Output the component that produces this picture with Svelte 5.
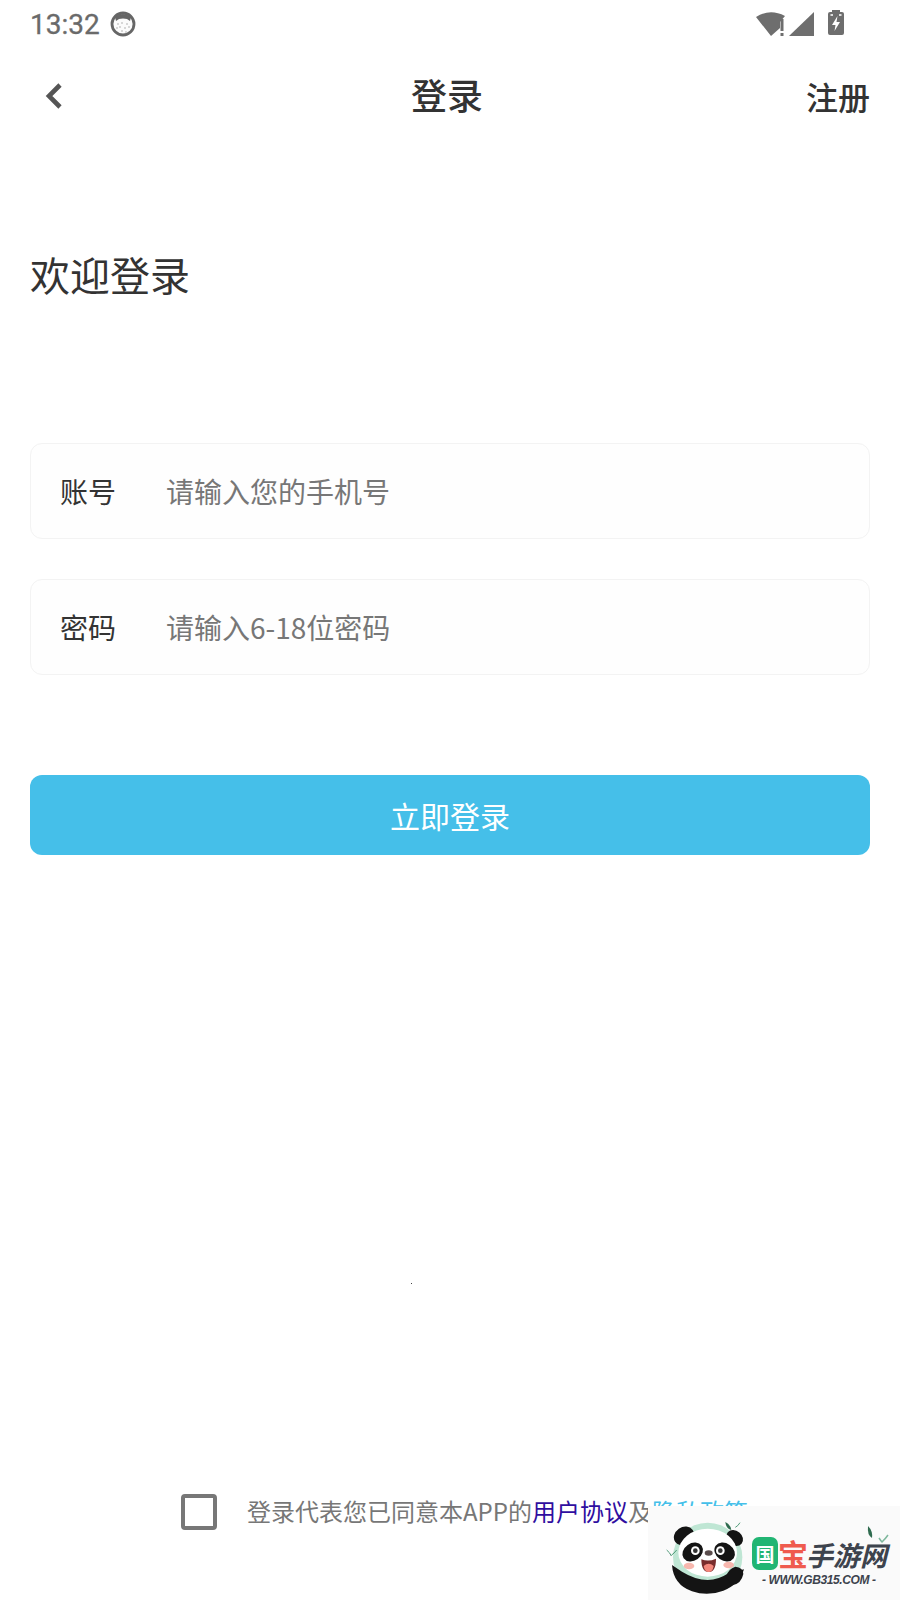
<script>
	let agreed = $state(false);
</script>

<div class="page">
	<div class="status">
		<span class="time">13:32</span>
		<svg class="cat" viewBox="0 0 26 26" width="26" height="26">
			<circle cx="13" cy="13" r="11" fill="#fbfbfb" stroke="#666" stroke-width="2.8" />
			<path d="M5 6 Q13 0 21 6 L20 10 L17 8 Q13 7 9 8 L6 10Z" fill="#666" />
			<g fill="#999">
				<circle cx="8" cy="13" r=".7" /><circle cx="12" cy="12" r=".7" /><circle cx="17" cy="13" r=".7" />
				<circle cx="10" cy="16" r=".7" /><circle cx="15" cy="17" r=".7" /><circle cx="19" cy="16" r=".7" />
				<circle cx="7" cy="17" r=".7" /><circle cx="12" cy="20" r=".7" /><circle cx="16" cy="21" r=".7" />
			</g>
		</svg>
		<span class="spacer"></span>
		<svg class="sys" viewBox="0 0 94 28" width="94" height="28">
			<path d="M0 8 Q14 -1 29 7 L24 13 V19 L15 27Z" fill="#6e6e6e" />
			<rect x="24.500" y="10" width="3" height="12" fill="#6e6e6e" />
			<rect x="24.500" y="24" width="3" height="3" fill="#6e6e6e" />
			<path d="M33 27 L58 3 V27Z" fill="#6e6e6e" />
			<path d="M76 3 V1 H84 V3 H86 Q88 3 88 5 V24 Q88 26 86 26 H74 Q72 26 72 24 V5 Q72 3 74 3Z" fill="#6e6e6e" />
			<path d="M81.500 7 L76 16 H79.500 L78.500 22 L84 13 H80.500Z" fill="#fff" />
			<path d="M74.500 5 H77 V7 H74.500Z M83 5 H85.500 V7 H83Z" fill="#ddd" />
		</svg>
	</div>

	<div class="nav">
		<svg class="back" viewBox="0 0 20 28" width="20" height="28">
			<path d="M16 3 L5 14 L16 25" fill="none" stroke="#555" stroke-width="4.600" />
		</svg>
		<span class="title">登录</span>
		<span class="reg">注册</span>
	</div>

	<h1>欢迎登录</h1>

	<div class="field first">
		<span class="label">账号</span>
		<span class="hint">请输入您的手机号</span>
	</div>
	<div class="field">
		<span class="label">密码</span>
		<span class="hint">请输入6-18位密码</span>
	</div>

	<button class="submit">立即登录</button>

	<div class="agree">
		<button class="check" class:on={agreed} aria-label="同意" onclick={() => (agreed = !agreed)}></button>
		<span class="terms">登录代表您已同意本APP的<span class="link">用户协议</span>及<span class="link2">隐私政策</span></span>
	</div>

	<i class="dot"></i>

	<div class="mark">
		<svg class="panda" viewBox="0 0 330 270" width="110" height="90">
			<circle cx="143" cy="142" r="104" fill="#bfe6d4" />
			<!-- body -->
			<path d="M36 165 Q40 224 96 244 Q143 260 190 242 Q238 224 252 178 L205 190 Q143 232 66 185Z" fill="#141414" />
			<!-- ears -->
			<ellipse cx="72" cy="78" rx="32" ry="27" transform="rotate(-35 72 78)" fill="#141414" />
			<ellipse cx="224" cy="84" rx="27" ry="22" transform="rotate(40 224 84)" fill="#141414" />
			<!-- head -->
			<ellipse cx="143" cy="128" rx="88" ry="72" fill="#fff" />
			<ellipse cx="98" cy="126" rx="33" ry="26" transform="rotate(-35 98 126)" fill="#141414" />
			<ellipse cx="194" cy="126" rx="33" ry="26" transform="rotate(35 194 126)" fill="#141414" />
			<circle cx="106" cy="122" r="13" fill="#fff" /><circle cx="106" cy="122" r="7" fill="#333" />
			<circle cx="181" cy="122" r="13" fill="#fff" /><circle cx="181" cy="122" r="7" fill="#333" />
			<ellipse cx="146" cy="129" rx="12" ry="8" fill="#5a4c4c" />
			<path d="M124 148 Q146 156 168 146 Q168 186 146 186 Q124 186 124 148Z" fill="#7a2d2d" />
			<path d="M131 168 Q146 155 161 168 Q158 186 146 186 Q134 186 131 168Z" fill="#f4877c" />
			<ellipse cx="87" cy="168" rx="16" ry="10" fill="#f7b7ae" />
			<ellipse cx="206" cy="165" rx="16" ry="10" fill="#f7b7ae" />
			<!-- raised paw -->
			<path d="M198 200 Q205 176 226 170 Q250 172 250 192 Q244 222 216 226Z" fill="#141414" />
			<!-- bamboo -->
			<path d="M196 36 Q212 44 214 60 Q198 56 196 36Z" fill="#2f6b4f" />
			<path d="M226 52 Q234 48 240 38 M20 120 Q30 128 34 138 M34 136 Q42 130 50 120" stroke="#4f9a78" stroke-width="3" fill="none" />
		</svg>
		<div class="brand">
			<div class="brand-top">
				<span class="guo">国</span><span class="bao">宝</span><span class="rest">手游网</span>
			</div>
			<div class="url">- WWW.GB315.COM -</div>
		</div>
		<svg class="leaf" viewBox="0 0 24 18" width="24" height="18">
			<path d="M2 0 Q7 5 6 12 Q1 9 2 0Z" fill="#2f6b4f" />
			<path d="M13 12 Q15 15 16 16 Q20 12 22 9" stroke="#7fb89d" stroke-width="1.500" fill="none" />
		</svg>
	</div>
</div>

<style>
	:global(body) {
		margin: 0;
		background: #fff;
	}

	.page {
		position: relative;
		display: flex;
		flex-direction: column;
		height: 1600px;
		width: 900px;
		overflow: hidden;
		font-family: "Noto Sans CJK SC", "Noto Sans", sans-serif;
		color: #333;
	}

	.status {
		display: flex;
		align-items: center;
		height: 46px;
		padding: 0 50px 0 30px;
		color: #6a6a6a;
	}

	.time {
		font: 28px Roboto, sans-serif;
		margin-top: 2px;
		-webkit-text-stroke: 0.3px #6a6a6a;
	}

	.cat {
		margin: 2px 0 0 10px;
	}

	.spacer {
		flex: 1;
	}

	.nav {
		position: relative;
		display: flex;
		align-items: center;
		justify-content: space-between;
		height: 100px;
		padding: 0 30px 0 44px;
	}

	.title {
		position: absolute;
		left: 411px;
		margin-top: -4px;
		font-size: 36px;
		font-weight: 500;
		line-height: 98px;
	}

	.reg {
		font-size: 32px;
		font-weight: 500;
	}

	h1 {
		margin: 96px 0 0 30px;
		font-size: 40px;
		font-weight: 400;
		line-height: 64px;
		color: #333;
	}

	.field {
		display: flex;
		align-items: center;
		margin: 40px 30px 0;
		height: 94px;
		border: 1px solid #f3f3f3;
		border-radius: 12px;
		font-size: 28px;
		background: #fefefe;
	}

	.first {
		margin-top: 137px;
	}

	.label {
		width: 106px;
		margin-left: 29px;
		color: #333;
	}

	.hint {
		color: #777;
	}

	.submit {
		margin: 100px 30px 0;
		height: 80px;
		border: 0;
		border-radius: 12px;
		background: #45bfe9;
		color: #fff;
		font: 30px "Noto Sans CJK SC", sans-serif;
	}

	.agree {
		display: flex;
		align-items: center;
		margin: auto 0 69px 181px;
	}

	.check {
		width: 36px;
		height: 36px;
		box-sizing: border-box;
		padding: 0;
		border: 4px solid #777;
		border-radius: 4px;
		background: #fff;
	}

	.check.on {
		background: #45bfe9;
	}

	.terms {
		margin-left: 30px;
		padding-bottom: 3px;
		font-size: 24px;
		color: #777;
		white-space: nowrap;
	}

	.link {
		color: #2f0ea0;
	}

	.link2 {
		color: #45bfe9;
	}

	.dot {
		position: absolute;
		left: 411px;
		top: 1283px;
		width: 1px;
		height: 1px;
		background: #444;
	}

	/* watermark sits over the bottom right corner */
	.mark {
		position: absolute;
		right: 0;
		bottom: 0;
		display: flex;
		width: 252px;
		height: 94px;
		background: #fafafa;
	}

	.panda {
		margin: 4px 0 0 12px;
		flex: none;
	}

	.brand {
		margin: 30px 0 0 -18px;
		width: 135px;
		font-family: "Noto Sans CJK SC", sans-serif;
	}

	.brand-top {
		display: flex;
		align-items: flex-end;
		height: 34px;
		font-weight: 700;
	}

	.guo {
		flex: none;
		width: 26px;
		height: 33px;
		border-radius: 7px;
		background: #21b573;
		color: #fff;
		font-size: 19px;
		line-height: 33px;
		text-align: center;
	}

	.bao {
		flex: none;
		width: 29px;
		color: #ef5b4e;
		font-size: 30px;
		line-height: 33px;
	}

	.rest {
		flex: none;
		margin-left: -1px;
		color: #3d434d;
		font-size: 27px;
		font-style: italic;
		line-height: 31px;
	}

	.url {
		margin: 4px 0 0 10px;
		font: italic 700 12px/12px "Liberation Sans", sans-serif;
		color: #3d434d;
		letter-spacing: -0.4px;
		white-space: nowrap;
	}

	.leaf {
		position: absolute;
		left: 218px;
		top: 20px;
	}
</style>
